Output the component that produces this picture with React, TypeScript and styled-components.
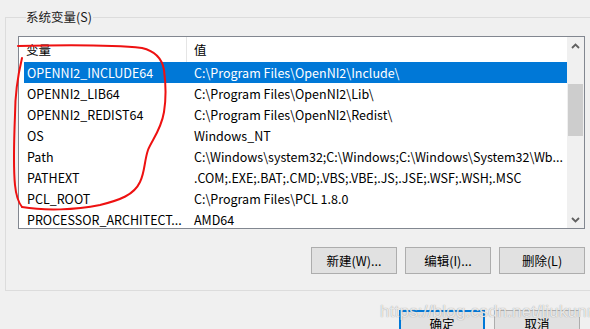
import React from 'react';
import styled, { createGlobalStyle } from 'styled-components';

const Global = createGlobalStyle`
  html, body { margin: 0; padding: 0; background: #f0f0f0; }
  body {
    font-family: "Noto Sans CJK SC", "Noto Sans", sans-serif;
    font-size: 12.5px;
    color: #000;
  }
`;

const Page = styled.div`
  position: relative;
  width: 590px;
  height: 329px;
  overflow: hidden;
  box-sizing: border-box;
  padding: 17px 0 0 5px;
  background: #f0f0f0;
  display: flex;
  flex-direction: column;
`;

const Group = styled.section`
  flex: none;
  width: 620px;
  height: 274px;
  box-sizing: border-box;
  border: 1px solid #dcdcdc;
  padding-left: 12px;
  display: flex;
  flex-direction: column;
  align-items: flex-start;
`;

const GroupLabel = styled.div`
  margin: -9px 0 0 8px;
  padding: 0 1px 0 0;
  height: 16px;
  line-height: 16px;
  background: #f0f0f0;
  color: #1a1a1a;
`;

const ListView = styled.div`
  margin-top: 11px;
  width: 567px;
  height: 193px;
  box-sizing: border-box;
  border: 1px solid #828790;
  background: #fff;
  display: flex;
  overflow: hidden;
`;

const ListMain = styled.div`
  flex: 1;
  display: flex;
  flex-direction: column;
  overflow: hidden;
`;

const Header = styled.div`
  flex: none;
  height: 25px;
  display: flex;
  align-items: stretch;
`;

const HeaderCell = styled.div<{ $w?: number }>`
  ${(p) => (p.$w ? `width: ${p.$w}px; flex: none; border-right: 1px solid #e5e5e5;` : 'flex: 1;')}
  box-sizing: border-box;
  padding-left: 7px;
  display: flex;
  align-items: center;
`;

const Row = styled.div<{ $sel?: boolean }>`
  flex: none;
  height: 21px;
  margin-left: 5px;
  display: flex;
  align-items: center;
  background: ${(p) => (p.$sel ? '#0078d7' : 'transparent')};
  color: ${(p) => (p.$sel ? '#fff' : '#000')};
`;

const NameCell = styled.div`
  width: 163px;
  flex: none;
  box-sizing: border-box;
  padding-left: 3px;
  white-space: nowrap;
  overflow: hidden;
`;

const ValueCell = styled.div`
  flex: 1;
  box-sizing: border-box;
  padding-left: 7px;
  white-space: nowrap;
  overflow: hidden;
`;

const ScrollBar = styled.div`
  flex: none;
  width: 17px;
  background: #f0f0f0;
  display: flex;
  flex-direction: column;
`;

const ScrollButton = styled.div`
  flex: none;
  height: 17px;
  display: flex;
  align-items: center;
  justify-content: center;
`;

const Track = styled.div`
  flex: 1;
  display: flex;
  flex-direction: column;
  align-items: center;
`;

const Thumb = styled.div<{ $top: number; $h: number }>`
  margin-top: ${(p) => p.$top}px;
  width: 15px;
  height: ${(p) => p.$h}px;
  background: #cdcdcd;
`;

const ButtonRow = styled.div<{ $w?: number; $gap: number }>`
  display: flex;
  justify-content: flex-end;
  gap: ${(p) => p.$gap}px;
  ${(p) => (p.$w ? `width: ${p.$w}px;` : '')}
`;

const GroupButtons = styled(ButtonRow)`
  margin-top: 18px;
`;

const Footer = styled(ButtonRow)`
  margin-top: 19px;
  padding-right: 10px;
`;

const Button = styled.button<{ $default?: boolean }>`
  width: 86px;
  height: 27px;
  box-sizing: border-box;
  margin: 0;
  padding: 0;
  font: inherit;
  color: #000;
  background: #e1e1e1;
  border: ${(p) => (p.$default ? '2px solid #0078d7' : '1px solid #adadad')};
  display: flex;
  align-items: center;
  justify-content: center;
`;

const Watermark = styled.div`
  position: absolute;
  left: 380px;
  top: 302px;
  font-family: "Liberation Sans", Arial, sans-serif;
  font-size: 17px;
  letter-spacing: 0.2px;
  color: rgba(255, 255, 255, 0.8);
  text-shadow: 0 0 1px rgba(110, 110, 110, 0.8);
  white-space: nowrap;
  pointer-events: none;
`;

const Annotation = styled.svg`
  position: absolute;
  left: 0;
  top: 0;
  width: 590px;
  height: 329px;
  pointer-events: none;
`;

const Chevron = ({ down }: { down?: boolean }) => (
  <svg width="9" height="6" viewBox="0 0 9 6">
    <polyline
      points={down ? '1,1 4.5,4.5 8,1' : '1,5 4.5,1.5 8,5'}
      fill="none"
      stroke="#606060"
      strokeWidth="1.8"
    />
  </svg>
);

const rows: [string, string][] = [
  ['OPENNI2_INCLUDE64', 'C:\\Program Files\\OpenNI2\\Include\\'],
  ['OPENNI2_LIB64', 'C:\\Program Files\\OpenNI2\\Lib\\'],
  ['OPENNI2_REDIST64', 'C:\\Program Files\\OpenNI2\\Redist\\'],
  ['OS', 'Windows_NT'],
  ['Path', 'C:\\Windows\\system32;C:\\Windows;C:\\Windows\\System32\\Wb...'],
  ['PATHEXT', '.COM;.EXE;.BAT;.CMD;.VBS;.VBE;.JS;.JSE;.WSF;.WSH;.MSC'],
  ['PCL_ROOT', 'C:\\Program Files\\PCL 1.8.0'],
  ['PROCESSOR_ARCHITECT...', 'AMD64'],
];

export default function App() {
  return (
    <>
      <Global />
      <Page>
        <Group>
          <GroupLabel>系统变量(S)</GroupLabel>
          <ListView>
            <ListMain>
              <Header>
                <HeaderCell $w={168}>变量</HeaderCell>
                <HeaderCell>值</HeaderCell>
              </Header>
              {rows.map(([n, v], i) => (
                <Row key={n} $sel={i === 0}>
                  <NameCell>{n}</NameCell>
                  <ValueCell>{v}</ValueCell>
                </Row>
              ))}
            </ListMain>
            <ScrollBar>
              <ScrollButton>
                <Chevron />
              </ScrollButton>
              <Track>
                <Thumb $top={30} $h={52} />
              </Track>
              <ScrollButton>
                <Chevron down />
              </ScrollButton>
            </ScrollBar>
          </ListView>
          <GroupButtons $w={567} $gap={8}>
            <Button>新建(W)...</Button>
            <Button>编辑(I)...</Button>
            <Button>删除(L)</Button>
          </GroupButtons>
        </Group>
        <Footer $gap={9}>
          <Button $default>确定</Button>
          <Button>取消</Button>
        </Footer>
        <Annotation viewBox="0 0 590 329">
          <path
            d="M18 46 C 60 45, 115 45, 142 48 C 155 51, 162 58, 164 70 C 166 85, 166 100, 164 112 C 161 130, 152 140, 148 150 C 144 162, 145 172, 140 182 C 134 195, 120 200, 100 205 C 75 210, 45 211, 22 207"
            fill="none"
            stroke="#ee1111"
            strokeWidth="2"
            strokeLinecap="round"
          />
          <path
            d="M22 58 C 18 75, 15 95, 15 115 C 14 140, 13 165, 15 185 C 16 195, 18 202, 22 207"
            fill="none"
            stroke="#ee1111"
            strokeWidth="2"
            strokeLinecap="round"
          />
        </Annotation>
        <Watermark>https://blog.csdn.net/liukunrs</Watermark>
      </Page>
    </>
  );
}
